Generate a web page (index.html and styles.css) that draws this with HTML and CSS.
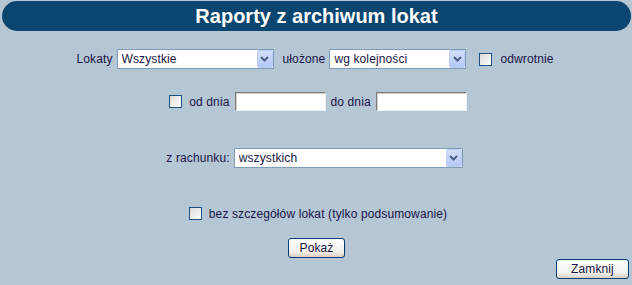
FILE: index.html
```html
<!DOCTYPE html>
<html lang="pl">
<head>
    <meta charset="UTF-8">
    <title>Raporty z archiwum lokat</title>
    <link rel="stylesheet" href="styles.css">
</head>
<body>
    <div class="header">Raporty z archiwum lokat</div>
    <form class="report-form">
        <div class="row row-sort">
            <label for="lokaty">Lokaty</label>
            <span class="combo combo-lokaty">
                <select id="lokaty"><option>Wszystkie</option></select>
                <span class="combo-btn"><svg width="9" height="6" viewBox="0 0 9 6"><path d="M1 1 L4.5 4.5 L8 1" fill="none" stroke="#4d6185" stroke-width="2"/></svg></span>
            </span>
            <label for="order" class="gap-left">ułożone</label>
            <span class="combo combo-order">
                <select id="order"><option>wg kolejności</option></select>
                <span class="combo-btn"><svg width="9" height="6" viewBox="0 0 9 6"><path d="M1 1 L4.5 4.5 L8 1" fill="none" stroke="#4d6185" stroke-width="2"/></svg></span>
            </span>
            <input type="checkbox" id="reverse" class="check check-reverse">
            <label for="reverse">odwrotnie</label>
        </div>
        <div class="row row-dates">
            <input type="checkbox" id="range" class="check">
            <label for="from" class="gap-check">od dnia</label>
            <input type="text" id="from" class="date">
            <label for="to">do dnia</label>
            <input type="text" id="to" class="date">
        </div>
        <div class="row row-account">
            <label for="account">z rachunku:</label>
            <span class="combo combo-account">
                <select id="account"><option>wszystkich</option></select>
                <span class="combo-btn"><svg width="9" height="6" viewBox="0 0 9 6"><path d="M1 1 L4.5 4.5 L8 1" fill="none" stroke="#4d6185" stroke-width="2"/></svg></span>
            </span>
        </div>
        <div class="row row-summary">
            <input type="checkbox" id="summary" class="check">
            <label for="summary" class="gap-check">bez szczegółów lokat (tylko podsumowanie)</label>
        </div>
        <div class="row row-show">
            <button type="button" class="btn btn-show">Pokaż</button>
        </div>
        <div class="row-close">
            <button type="button" class="btn btn-close">Zamknij</button>
        </div>
    </form>
</body>
</html>
```

FILE: styles.css
```css
body {
    margin: 0;
    background-color: #b5c6d4;
    font-family: "Liberation Sans", Arial, sans-serif;
    font-size: 12px;
    letter-spacing: 0.12px;
    color: #1a1646;
}
.header {
    margin: 1px 1px 0 2px;
    height: 30px;
    line-height: 30px;
    border-radius: 15px;
    background-color: #0b4670;
    color: white;
    font-size: 20px;
    font-weight: bold;
    letter-spacing: 0;
    text-align: center;
}
.row {
    display: flex;
    justify-content: center;
    align-items: center;
}
.row-sort {
    margin-top: 18px;
    height: 20px;
    padding-right: 2px;
}
.row-dates {
    margin-top: 23px;
    height: 19px;
    padding-left: 4px;
}
.row-account {
    margin-top: 37px;
    height: 20px;
    padding-right: 3px;
}
.row-summary {
    margin-top: 38px;
    height: 15px;
    padding-left: 4px;
}
.row-show {
    margin-top: 17px;
    height: 20px;
    padding-left: 1px;
}
.row-close {
    display: flex;
    justify-content: flex-end;
    margin-top: 1px;
    padding-right: 3px;
}
label {
    white-space: nowrap;
}
.combo {
    position: relative;
    display: inline-block;
    margin-left: 4px;
    height: 20px;
}
.combo select {
    appearance: none;
    -webkit-appearance: none;
    box-sizing: border-box;
    height: 20px;
    margin: 0;
    padding: 0 0 0 4px;
    border: 1px solid #7f9db9;
    border-radius: 0;
    background: white;
    font-family: inherit;
    font-size: 12px;
    letter-spacing: inherit;
    color: #1a1646;
    outline: none;
}
.combo-lokaty select { width: 157px; }
.combo-order select { width: 137px; }
.combo-account select { width: 229px; }
.combo-btn {
    position: absolute;
    top: 1px;
    right: 1px;
    box-sizing: border-box;
    width: 16px;
    height: 18px;
    border: 1px solid #bccdf3;
    border-radius: 2px;
    background: linear-gradient(#d2dffb, #b4c8f6);
    display: flex;
    align-items: center;
    justify-content: center;
    pointer-events: none;
}
.gap-left {
    margin-left: 9px;
}
.check {
    appearance: none;
    -webkit-appearance: none;
    box-sizing: border-box;
    width: 13px;
    height: 13px;
    margin: 0;
    border: 1px solid #1c5180;
    background: linear-gradient(135deg, #dcdcd6, #ffffff);
}
.check-reverse {
    margin-left: 13px;
    margin-right: 8px;
}
.gap-check {
    margin-left: 7px;
}
.row-dates .date {
    box-sizing: border-box;
    width: 91px;
    height: 19px;
    margin: 0 5px 0 5px;
    padding: 0 2px;
    border: 1px solid;
    border-color: #7a7a7a #f0f0f0 #f0f0f0 #7a7a7a;
    box-shadow: inset 1px 1px 0 #d4d0c8;
    background: white;
    font-family: inherit;
    font-size: 12px;
}
.row-dates .date:last-child {
    margin-right: 0;
}
.btn {
    box-sizing: border-box;
    height: 20px;
    padding: 0;
    border: 1px solid #003c74;
    border-radius: 3px;
    background: linear-gradient(#ffffff, #f3f2ec 70%, #d6d0c5);
    font-family: inherit;
    font-size: 12px;
    letter-spacing: inherit;
    color: #1a1646;
}
.btn-show {
    width: 57px;
}
.btn-close {
    width: 73px;
}
```
